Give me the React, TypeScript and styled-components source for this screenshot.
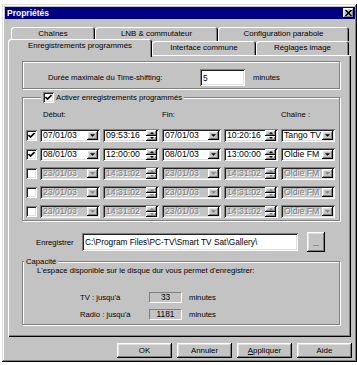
import React from 'react'
import styled, { createGlobalStyle, css } from 'styled-components'

const FACE = '#c3c3c3'
const SHADOW = '#808080'
const FONT = `"Liberation Sans", Arial, sans-serif`

const GlobalStyle = createGlobalStyle`
  html, body {
    margin: 0;
    padding: 0;
    background: #fff;
  }
  body {
    font-family: ${FONT};
    font-size: 7.7px;
    color: #000;
  }
`

const raised = css`
  box-shadow: inset -1px -1px #000, inset 1px 1px #fff, inset -2px -2px ${SHADOW}, inset 2px 2px #dfdfdf;
`

const sunken = css`
  box-shadow: inset 1px 1px ${SHADOW}, inset -1px -1px #fff, inset 2px 2px #202020, inset -2px -2px #dfdfdf;
`

const disabledText = css`
  color: ${SHADOW};
  text-shadow: 1px 1px #fff;
`

const Dialog = styled.div`
  margin: 4px 0 0 2px;
  width: 355px;
  height: 358px;
  box-sizing: border-box;
  padding: 3px 2px 3px 3px;
  background: ${FACE};
  box-shadow: inset -1px -1px #000, inset 1px 1px #dfdfdf, inset -2px -2px ${SHADOW}, inset 2px 2px #fff;
  display: flex;
  flex-direction: column;
`

const TitleBar = styled.div`
  height: 12px;
  background: #000080;
  display: flex;
  align-items: center;
  justify-content: space-between;
  padding: 0 1px 0 2px;
  color: #fff;
  font-weight: bold;
  font-size: 8.5px;
`

const CloseButton = styled.div`
  width: 11px;
  height: 10px;
  background: ${FACE};
  ${raised}
  display: flex;
  align-items: center;
  justify-content: center;
`

const TabStrip = styled.div`
  margin: 8px 0 0 3px;
  display: flex;
  flex-direction: column;
  position: relative;
  z-index: 1;
`

const TabRow = styled.div<{ $back?: boolean }>`
  display: flex;
  align-items: flex-end;
  height: ${p => (p.$back ? 13 : 18)}px;
  padding-left: ${p => (p.$back ? 3 : 0)}px;
  margin-top: ${p => (p.$back ? 0 : -1)}px;
  margin-bottom: ${p => (p.$back ? 0 : -2)}px;
`

const Tab = styled.div<{ $w: number; $active?: boolean; $back?: boolean }>`
  width: ${p => p.$w}px;
  height: ${p => (p.$active ? 18 : 14)}px;
  margin-bottom: ${p => (p.$active ? 0 : p.$back ? -1 : 2)}px;
  align-self: ${p => (p.$back ? 'flex-start' : 'flex-end')};
  box-sizing: border-box;
  padding-bottom: ${p => (p.$active ? 4 : 0)}px;
  background: ${FACE};
  border-radius: 3px 3px 0 0;
  box-shadow: inset 1px 1px #fff, inset -1px 0 #000, inset -2px 0 ${SHADOW};
  display: flex;
  align-items: center;
  justify-content: center;
  white-space: nowrap;
  line-height: 10px;
  font-size: 7.9px;
`

const Panel = styled.div`
  margin-left: 3px;
  width: 343px;
  height: 282px;
  box-sizing: border-box;
  padding: 0 11px 0 14px;
  background: ${FACE};
  box-shadow: inset 1px 1px #fff, inset -1px -1px #000, inset -2px -2px ${SHADOW};
  display: flex;
  flex-direction: column;
`

const etched = css`
  border: 1px solid ${SHADOW};
  box-shadow: inset 1px 1px #fff, 1px 1px #fff;
`

const TimeShiftBox = styled.div`
  margin-top: 6px;
  height: 28px;
  box-sizing: border-box;
  ${etched}
  display: flex;
  align-items: center;
  padding: 7px 0 2px 25px;
`

const Label = styled.span<{ $w?: number }>`
  width: ${p => (p.$w ? `${p.$w}px` : 'auto')};
  flex: none;
  white-space: nowrap;
`

const TextInput = styled.div<{ $w: number; $h: number }>`
  width: ${p => p.$w}px;
  height: ${p => p.$h}px;
  box-sizing: border-box;
  padding: 0 3px;
  background: #fff;
  ${sunken}
  display: flex;
  align-items: center;
  font-size: 8.3px;
  white-space: nowrap;
  overflow: hidden;
`

const Unit = styled.span<{ $gap: number }>`
  margin-left: ${p => p.$gap}px;
`

const Group = styled.fieldset<{ $top: number }>`
  margin: ${p => p.$top}px 0 0 0;
  padding: 0;
  min-width: 0;
  ${etched}
`

const Legend = styled.legend<{ $indent: number }>`
  margin-left: ${p => p.$indent}px;
  padding: 0 2px;
  background: ${FACE};
  display: flex;
  align-items: center;
  gap: 2px;
  line-height: 9px;
`

const ScheduleGrid = styled.div`
  display: grid;
  grid-template-columns: 11px 60px 56px 59px 54px 54px;
  column-gap: 3px;
  row-gap: 6px;
  grid-auto-rows: 13px;
  padding: 7px 0 2px 3px;
`

const ColHead = styled.div<{ $col: number; $pad?: number }>`
  grid-column: ${p => p.$col};
  padding-left: ${p => p.$pad ?? 0}px;
  line-height: 10px;
  height: 10px;
  margin-bottom: -3px;
  align-self: start;
`

const CheckBox = styled.div`
  width: 11px;
  height: 11px;
  box-sizing: border-box;
  background: #fff;
  ${sunken}
  display: flex;
  align-items: center;
  justify-content: center;
  align-self: center;
`

const Field = styled.div<{ $disabled?: boolean }>`
  height: 13px;
  box-sizing: border-box;
  padding: 2px;
  background: ${p => (p.$disabled ? FACE : '#fff')};
  ${sunken}
  display: flex;
`

const FieldText = styled.span<{ $disabled?: boolean }>`
  flex: 1;
  padding-left: 1px;
  font-size: 8.7px;
  line-height: 9px;
  white-space: nowrap;
  overflow: hidden;
  ${p => p.$disabled && disabledText}
`

const DropButton = styled.div`
  width: 11px;
  flex: none;
  background: ${FACE};
  ${raised}
  display: flex;
  align-items: center;
  justify-content: center;
`

const SpinBox = styled.div`
  width: 11px;
  flex: none;
  display: flex;
  flex-direction: column;
  margin: -1px 0;
`

const SpinButton = styled.div`
  flex: 1;
  background: ${FACE};
  ${raised}
  display: flex;
  align-items: center;
  justify-content: center;
`

const PathRow = styled.div`
  margin-top: 11px;
  height: 20px;
  display: flex;
  align-items: center;
  padding-left: 14px;
`

const SmallButton = styled.div`
  margin-left: 9px;
  width: 18px;
  height: 20px;
  box-sizing: border-box;
  background: ${FACE};
  ${raised}
  display: flex;
  align-items: flex-end;
  justify-content: center;
  padding-bottom: 5px;
  font-size: 7px;
  line-height: 7px;
`

const CapacityText = styled.div`
  padding-left: 14px;
  line-height: 9px;
`

const CapacityGrid = styled.div`
  display: grid;
  grid-template-columns: 69px 33px auto;
  grid-auto-rows: 12px;
  row-gap: 5px;
  align-items: center;
  padding: 16px 0 4px 57px;
`

const ValueBox = styled.div`
  height: 11px;
  box-sizing: border-box;
  background: ${FACE};
  border: 1px solid;
  border-color: ${SHADOW} #fff #fff ${SHADOW};
  display: flex;
  align-items: center;
  justify-content: center;
  font-size: 8.3px;
`

const MinutesCell = styled.span`
  padding-left: 7px;
`

const ButtonBar = styled.div`
  margin-top: 6px;
  display: flex;
  justify-content: flex-end;
  gap: 5px;
  padding-right: 3px;
`

const PushButton = styled.div`
  width: 55px;
  height: 15px;
  background: ${FACE};
  ${raised}
  display: flex;
  align-items: center;
  justify-content: center;
  font-size: 7.9px;
`

const Check = () => (
  <svg width="7" height="7" viewBox="0 0 7 7">
    <path d="M0.5 3 L2.5 5 L6.5 1" stroke="#000" strokeWidth="1.6" fill="none" />
  </svg>
)

const Arrow = ({ up, color, w = 5 }: { up?: boolean; color: string; w?: number }) => (
  <svg width={w} height={Math.ceil(w / 2)} viewBox="0 0 6 3">
    <path d={up ? 'M0 3 L3 0 L6 3 Z' : 'M0 0 L6 0 L3 3 Z'} fill={color} />
  </svg>
)

const Combo = ({ value, disabled }: { value: string; disabled?: boolean }) => (
  <Field $disabled={disabled}>
    <FieldText $disabled={disabled}>{value}</FieldText>
    <DropButton>
      <Arrow color={disabled ? SHADOW : '#000'} />
    </DropButton>
  </Field>
)

const Spinner = ({ value, disabled }: { value: string; disabled?: boolean }) => (
  <Field $disabled={disabled}>
    <FieldText $disabled={disabled}>{value}</FieldText>
    <SpinBox>
      <SpinButton>
        <Arrow up w={4} color={disabled ? SHADOW : '#000'} />
      </SpinButton>
      <SpinButton>
        <Arrow w={4} color={disabled ? SHADOW : '#000'} />
      </SpinButton>
    </SpinBox>
  </Field>
)

const schedule = [
  { on: true, d1: '07/01/03', t1: '09:53:16', d2: '07/01/03', t2: '10:20:16', ch: 'Tango TV' },
  { on: true, d1: '08/01/03', t1: '12:00:00', d2: '08/01/03', t2: '13:00:00', ch: 'Oldie FM' },
  { on: false, d1: '23/01/03', t1: '14:31:02', d2: '23/01/03', t2: '14:31:02', ch: 'Oldie FM' },
  { on: false, d1: '23/01/03', t1: '14:31:02', d2: '23/01/03', t2: '14:31:02', ch: 'Oldie FM' },
  { on: false, d1: '23/01/03', t1: '14:31:02', d2: '23/01/03', t2: '14:31:02', ch: 'Oldie FM' },
]

export default function App() {
  return (
    <>
      <GlobalStyle />
      <Dialog>
        <TitleBar>
          <span>Propriétés</span>
          <CloseButton>
            <svg width="7" height="6" viewBox="0 0 7 6">
              <path d="M0.5 0 L6.5 6 M6.5 0 L0.5 6" stroke="#000" strokeWidth="1.5" />
            </svg>
          </CloseButton>
        </TitleBar>

        <TabStrip>
          <TabRow $back>
            <Tab $back $w={84}>Chaînes</Tab>
            <Tab $back $w={123}>LNB &amp; commutateur</Tab>
            <Tab $back $w={131}>Configuration parabole</Tab>
          </TabRow>
          <TabRow>
            <Tab $active $w={144}>Enregistrements programmés</Tab>
            <Tab $w={104}>Interface commune</Tab>
            <Tab $w={93}>Réglages image</Tab>
          </TabRow>
        </TabStrip>

        <Panel>
          <TimeShiftBox>
            <Label $w={152}>Durée maximale du Time-shifting:</Label>
            <TextInput $w={45} $h={17}>5</TextInput>
            <Unit $gap={8}>minutes</Unit>
          </TimeShiftBox>

          <Group $top={3}>
            <Legend $indent={18}>
              <CheckBox>
                <Check />
              </CheckBox>
              <span>Activer enregistrements programmés</span>
            </Legend>
            <ScheduleGrid>
              <ColHead $col={2} $pad={3}>Début:</ColHead>
              <ColHead $col={4}>Fin:</ColHead>
              <ColHead $col={6}>Chaîne :</ColHead>
              {schedule.map((r, i) => (
                <React.Fragment key={i}>
                  <CheckBox>{r.on && <Check />}</CheckBox>
                  <Combo value={r.d1} disabled={!r.on} />
                  <Spinner value={r.t1} disabled={!r.on} />
                  <Combo value={r.d2} disabled={!r.on} />
                  <Spinner value={r.t2} disabled={!r.on} />
                  <Combo value={r.ch} disabled={!r.on} />
                </React.Fragment>
              ))}
            </ScheduleGrid>
          </Group>

          <PathRow>
            <Label $w={46}>Enregistrer</Label>
            <TextInput $w={216} $h={18}>C:\Program Files\PC-TV\Smart TV Sat\Gallery\</TextInput>
            <SmallButton>...</SmallButton>
          </PathRow>

          <Group $top={5}>
            <Legend $indent={1}>Capacité</Legend>
            <CapacityText>L'espace disponible sur le disque dur vous permet d'enregistrer:</CapacityText>
            <CapacityGrid>
              <Label>TV : jusqu'à</Label>
              <ValueBox>33</ValueBox>
              <MinutesCell>minutes</MinutesCell>
              <Label>Radio : jusqu'à</Label>
              <ValueBox>1181</ValueBox>
              <MinutesCell>minutes</MinutesCell>
            </CapacityGrid>
          </Group>
        </Panel>

        <ButtonBar>
          <PushButton>OK</PushButton>
          <PushButton>Annuler</PushButton>
          <PushButton>
            <span>
              <u>A</u>ppliquer
            </span>
          </PushButton>
          <PushButton>Aide</PushButton>
        </ButtonBar>
      </Dialog>
    </>
  )
}
